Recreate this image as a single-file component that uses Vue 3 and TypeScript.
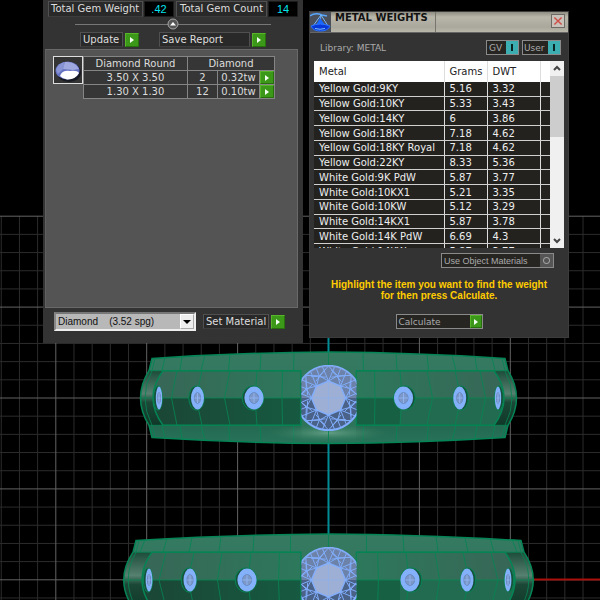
<script setup lang="ts">
import { computed, ref } from 'vue'

interface Metal { name: string; grams: string; dwt: string }
interface GemRow { size: string; count: number; weight: string }
type Point = [number, number]
interface Gem { x: number; rx: number }
interface Ring {
  y: number
  left: number
  corner: number
  top: number
  shoulder: number
  recess: number
  recessLeft: number
  upper: Point[]
  mid: number[][]
  gems: Gem[]
}

const metals: Metal[] = [
  { name: 'Yellow Gold:9KY', grams: '5.16', dwt: '3.32' },
  { name: 'Yellow Gold:10KY', grams: '5.33', dwt: '3.43' },
  { name: 'Yellow Gold:14KY', grams: '6', dwt: '3.86' },
  { name: 'Yellow Gold:18KY', grams: '7.18', dwt: '4.62' },
  { name: 'Yellow Gold:18KY Royal', grams: '7.18', dwt: '4.62' },
  { name: 'Yellow Gold:22KY', grams: '8.33', dwt: '5.36' },
  { name: 'White Gold:9K PdW', grams: '5.87', dwt: '3.77' },
  { name: 'White Gold:10KX1', grams: '5.21', dwt: '3.35' },
  { name: 'White Gold:10KW', grams: '5.12', dwt: '3.29' },
  { name: 'White Gold:14KX1', grams: '5.87', dwt: '3.78' },
  { name: 'White Gold:14K PdW', grams: '6.69', dwt: '4.3' },
  { name: 'White Gold:14KW', grams: '5.87', dwt: '3.77' },
]

const gemRows: GemRow[] = [
  { size: '3.50 X 3.50', count: 2, weight: '0.32tw' },
  { size: '1.30 X 1.30', count: 12, weight: '0.10tw' },
]
const totalCount = computed(() => gemRows.reduce((sum, row) => sum + row.count, 0))

const selected = ref(-1)
const material = ref('diamond')
const showGv = ref(true)
const showUser = ref(true)
const useObject = ref(false)

// Viewport grid: one unit every 18.2, a stronger line every fifth unit
const STEP = 18.18
const columns = Array.from({ length: 74 }, (_, i) => ({ at: 328.5 + (i - 36) * STEP, major: (i - 36) % 5 === 0 }))
const lines = Array.from({ length: 44 }, (_, i) => ({ at: 216.2 + i * STEP, major: i % 5 === 0 }))

const rings: Ring[] = [
  {
    y: 398, left: 140, corner: 152, top: 352, shoulder: 358.5, recess: 27.3, recessLeft: 153,
    upper: [[165, 162], [182, 180], [205, 201], [230, 228.5], [261, 260], [294, 293.5]],
    mid: [[177, 171.5], [202, 196], [230, 224.5], [257, 255], [282.5, 282]],
    gems: [{ x: 159, rx: 3.2 }, { x: 197.5, rx: 6.5 }, { x: 254, rx: 9.6 }, { x: 403.5, rx: 9.6 }, { x: 459.7, rx: 6.5 }, { x: 498, rx: 3.2 }],
  },
  {
    y: 580, left: 122.5, corner: 136, top: 534, shoulder: 540.5, recess: 27.8, recessLeft: 142,
    upper: [[145, 140], [167, 163], [192, 189], [221, 219], [254, 253], [290.5, 290.5]],
    mid: [[166, 159], [194, 188], [222, 217.5], [251, 248], [279.5, 278.5]],
    gems: [{ x: 149, rx: 3.4 }, { x: 190, rx: 6.5 }, { x: 247, rx: 9.6 }, { x: 410, rx: 9.6 }, { x: 467, rx: 6.5 }, { x: 508, rx: 3.4 }],
  },
]

function outline(r: Ring): string {
  const dt = r.y - r.top
  const ds = r.y - r.shoulder
  return `M${r.corner} ${-ds}Q240 ${-dt + 0.5} 328.5 ${-dt}V${dt - 0.5}Q240 ${dt - 1} ${r.corner} ${ds}L${r.corner - 3} ${r.recess}Q${r.left - 8} 0 ${r.corner - 3} ${-r.recess}Z`
}
// Same silhouette without the seam where the two halves meet
function rim(r: Ring): string {
  const dt = r.y - r.top
  const ds = r.y - r.shoulder
  return `M328.5 ${-dt}Q240 ${-dt + 0.5} ${r.corner} ${-ds}L${r.corner - 3} ${-r.recess}Q${r.left - 8} 0 ${r.corner - 3} ${r.recess}L${r.corner} ${ds}Q240 ${dt - 1} 328.5 ${dt - 0.5}`
}
function recess(r: Ring): string {
  return `M301 ${-r.recess}H${r.recessLeft + 10}Q${r.recessLeft - 10} 0 ${r.recessLeft + 10} ${r.recess}H301Z`
}
function lowerRecess(r: Ring): string {
  return `M301 0H${r.recessLeft}Q${r.recessLeft} 16 ${r.recessLeft + 10} ${r.recess}H301Z`
}
function wires(r: Ring): string {
  const e = r.recess
  const s = r.y - r.top - 1.5
  let d = `M${r.corner - 3} ${-e}H301M${r.corner - 3} ${e}H301M${r.left} 0H301`
  r.upper.forEach(([a, b], i) => {
    const lift = Math.max(0, 4 - i * 1.2)
    d += `M${a} ${-s + lift}L${b} ${-e}M${b} ${e}L${a} ${s - lift}`
  })
  r.mid.forEach(([a, b]) => { d += `M${a} ${-e}L${b} 0L${a} ${e}` })
  return d
}
function endWires(r: Ring): string {
  const e = r.recess
  const s = r.y - r.shoulder
  return `M${r.corner + 3} ${-s}L${r.corner} ${-e}Q${r.left - 2} 0 ${r.corner} ${e}L${r.corner + 3} ${s}`
}

// Brilliant-cut facet wireframe
const polar = (radius: number, deg: number): Point => {
  const a = (deg * Math.PI) / 180
  return [Math.round(radius * Math.cos(a) * 10) / 10, Math.round(radius * Math.sin(a) * 10) / 10]
}
const seg = (a: Point, b: Point): string => `M${a[0]} ${a[1]}L${b[0]} ${b[1]}`
const facets = (() => {
  let d = ''
  for (let i = 0; i < 8; i++) {
    const deg = i * 45
    const t = polar(17, deg)
    const next = polar(17, deg + 45)
    const star = polar(24, deg + 22.5)
    d += seg(t, star) + seg(next, star) + seg(star, polar(32, deg)) + seg(star, polar(32, deg + 45))
    d += seg(star, polar(32, deg + 22.5)) + seg(t, polar(32, deg + 11)) + seg(next, polar(32, deg + 34))
    d += seg(polar(28, deg + 6), polar(21, deg + 38)) + seg(polar(21, deg + 8), polar(29, deg + 39))
  }
  return d
})()
const tablePoints = Array.from({ length: 8 }, (_, i) => polar(17, i * 45).join(',')).join(' ')
</script>

<template>
  <main class="viewport">
    <svg class="scene" viewBox="0 0 600 600" preserveAspectRatio="xMidYMin slice" aria-hidden="true">
      <defs>
        <linearGradient id="band" x1="0" y1="0" x2="0" y2="1">
          <stop offset="0" stop-color="#357a61" /><stop offset=".4" stop-color="#337660" />
          <stop offset=".65" stop-color="#216149" /><stop offset="1" stop-color="#28735a" />
        </linearGradient>
        <linearGradient id="edge" x1="0" y1="0" x2="0" y2="1">
          <stop offset="0" stop-color="#1d4c3a" /><stop offset=".42" stop-color="#56806f" />
          <stop offset=".58" stop-color="#1b4837" /><stop offset="1" stop-color="#103828" />
        </linearGradient>
        <linearGradient id="inner" x1="0" y1="0" x2="1" y2="0">
          <stop offset="0" stop-color="#386656" /><stop offset="1" stop-color="#2d785c" />
        </linearGradient>
        <linearGradient id="shade" x1="0" y1="0" x2="1" y2="0">
          <stop offset="0" stop-color="#1b4635" /><stop offset="1" stop-color="#165a41" />
        </linearGradient>
        <radialGradient id="glow">
          <stop offset="0" stop-color="#6da68c" stop-opacity=".85" /><stop offset="1" stop-color="#347a5e" stop-opacity="0" />
        </radialGradient>
        <linearGradient id="seat-fill" x1="0" y1="0" x2="0" y2="1">
          <stop offset="0" stop-color="#357a61" /><stop offset=".7" stop-color="#2f7459" /><stop offset="1" stop-color="#28735a" />
        </linearGradient>
        <clipPath id="seat"><rect x="-27" y="-33" width="55" height="66" /></clipPath>
      </defs>

      <g stroke-width="1">
        <g v-for="major in [false, true]" :key="String(major)" :stroke="major ? '#636363' : '#2c2c2c'">
          <template v-for="c in columns" :key="'c' + c.at">
            <line v-if="c.major === major" :x1="c.at" :x2="c.at" y1="216" y2="1000" />
          </template>
          <template v-for="l in lines" :key="'l' + l.at">
            <line v-if="l.major === major" x1="-320" x2="1000" :y1="l.at" :y2="l.at" />
          </template>
        </g>
      </g>
      <path d="M328.5 338V600" stroke="#008c96" stroke-width="2" />
      <path d="M534 579.5H1000" stroke="#a8100c" stroke-width="2" />

      <g v-for="(r, ri) in rings" :key="ri" :transform="`translate(0 ${r.y})`">
        <g v-for="side in [0, 1]" :key="side" :transform="side ? 'translate(657 0) scale(-1 1)' : undefined">
          <path :d="outline(r)" fill="url(#band)" />
          <path :d="`M${r.corner - 3} ${-r.recess}H${r.recessLeft + 16}V${r.recess}H${r.corner - 3}Q${r.left - 8} 0 ${r.corner - 3} ${-r.recess}Z`" fill="url(#edge)" />
          <path :d="recess(r)" fill="url(#inner)" />
          <path :d="lowerRecess(r)" :fill="side ? '#236b50' : 'url(#shade)'" />
          <rect v-if="side" x="257" y="0" width="44" :height="r.recess" fill="#176044" />
          <path :d="rim(r)" class="wire-strong" />
          <path :d="recess(r)" class="wire-strong" />
          <path :d="wires(r)" class="wire" />
          <path :d="endWires(r)" class="wire" />
        </g>
        <rect x="301.5" y="-44.5" width="54.5" height="88.5" fill="url(#seat-fill)" />
        <ellipse cx="328.5" cy="35" rx="62" ry="9" fill="url(#glow)" />
        <path d="M301 -27.3V27.3M356 -27.3V27.3M328.5 -45V44" class="wire" />
        <g transform="translate(328.5 0)">
          <g clip-path="url(#seat)">
            <circle r="32.2" fill="#4a6188" stroke="#80adff" stroke-width="2" />
            <path d="M-32 0A32 32 0 0 1 32 0Z" fill="#7f94ba" opacity=".65" />
            <path :d="facets" class="facet" />
          </g>
          <polygon :points="tablePoints" fill="#9dafd5" stroke="#83aefc" stroke-width="1.5" />
          <path d="M-17 0H17M0-17V17" class="facet-soft" />
        </g>
        <g v-for="g in r.gems" :key="g.x" :transform="`translate(${g.x} 0)`">
          <ellipse :cx="g.x < 328 ? -1 : 1" :rx="g.rx + 1.2" ry="12.2" class="socket" />
          <ellipse :rx="g.rx" ry="11.4" fill="#82b0fb" />
          <ellipse :rx="g.rx * 0.48" ry="5.4" fill="#7c98c8" stroke="#6684b8" stroke-width=".8" />
          <path :d="`M${-g.rx * 0.5} 0H${g.rx * 0.5}M0-5V5`" stroke="#93b9fa" stroke-width=".8" />
          <ellipse :rx="g.rx * 0.76" ry="8.7" fill="none" stroke="#92b6f1" stroke-width=".8" stroke-dasharray="2 2" />
        </g>
      </g>
    </svg>

    <section class="window gems" aria-label="Gem report">
      <div class="totals">
        <span class="tag total-label">Total Gem Weight</span><output class="readout">.42</output>
        <span class="tag total-label count-label">Total Gem Count</span><output class="readout">{{ totalCount }}</output>
      </div>
      <div class="divider">
        <button class="knob" type="button" aria-label="Collapse">
          <svg viewBox="0 0 12 12"><circle cx="6" cy="6" r="5" fill="#555" stroke="#a5a5a5" /><path d="M3 7.5L6 4L9 7.5Z" fill="#fff" /></svg>
        </button>
      </div>
      <div class="commands">
        <button class="command" type="button"><span class="tag update">Update</span><span class="go"><i /></span></button>
        <button class="command" type="button"><span class="tag save">Save Report</span><span class="go"><i /></span></button>
      </div>
      <div class="report">
        <svg class="gem-icon" viewBox="0 0 30 28">
          <rect x=".5" y=".5" width="29" height="27" fill="#343434" stroke="#ddd" />
          <ellipse cx="16" cy="16.5" rx="12" ry="9.5" fill="#191b24" />
          <ellipse cx="14.5" cy="14.5" rx="12" ry="9" fill="#6673c2" />
          <path d="M3 14Q5 7 12 6L10 13L5 18Z" fill="#8793d3" /><path d="M12 6Q22 5 26 13L20 14L10 13Z" fill="#a0a9df" />
          <path d="M7 20Q9 14 17 15Q24 14 26 17Q22 24 14 23.5Q10 23 7 20Z" fill="#fff" />
        </svg>
        <table class="gem-table">
          <colgroup><col class="c-size"><col class="c-count"><col class="c-weight"><col class="c-go"></colgroup>
          <thead><tr><th>Diamond Round</th><th colspan="3">Diamond</th></tr></thead>
          <tbody>
            <tr v-for="row in gemRows" :key="row.size">
              <td>{{ row.size }}</td><td>{{ row.count }}</td><td>{{ row.weight }}</td>
              <td class="go-cell"><button class="go" type="button" :aria-label="'Select ' + row.size"><i /></button></td>
            </tr>
          </tbody>
        </table>
      </div>
      <div class="material">
        <div class="picker">
          <select v-model="material" aria-label="Gem material"><option value="diamond">Diamond &nbsp; &nbsp;(3.52 spg)</option></select>
          <span class="drop"><i /></span>
        </div>
        <button class="command" type="button"><span class="tag set">Set Material</span><span class="go"><i /></span></button>
      </div>
    </section>

    <section class="window metal" aria-label="Metal weights">
      <header class="titlebar">
        <svg class="scale-icon" viewBox="0 0 21 20">
          <rect width="21" height="20" fill="#4b4f5a" />
          <path d="M0 4Q5 0 12 3L17 4" fill="none" stroke="#58a7ff" stroke-width="1.5" />
          <path d="M11 3L3 14M11 3L18 14M11 3L10 13" stroke="#75b8ff" fill="none" />
          <path d="M6 13L10 6L16 14Z" fill="#1766ff" />
          <path d="M1 14Q10 10 20 14Q18 19 10.5 19Q3 19 1 14Z" fill="#0837d8" stroke="#2b75ff" /><path d="M5 16.5Q10 18 15 16.5" stroke="#7ac0ff" fill="none" />
        </svg>
        <h1>METAL WEIGHTS</h1>
        <span class="title-rest"><button class="close" type="button" aria-label="Close"><svg viewBox="0 0 10 10"><path d="M2 2L8 8M8 2L2 8" stroke="#cf4f48" stroke-width="1.2" /></svg></button></span>
      </header>
      <div class="library">
        <span class="library-name">Library: METAL</span>
        <label class="toggle"><span>GV</span><input v-model="showGv" type="checkbox"></label>
        <label class="toggle user"><span>User</span><input v-model="showUser" type="checkbox"></label>
      </div>
      <div class="list">
        <div class="list-body">
          <table class="metal-table">
            <colgroup><col><col class="c-grams"><col class="c-dwt"><col class="c-end"></colgroup>
            <thead><tr><th>Metal</th><th>Grams</th><th>DWT</th><th /></tr></thead>
            <tbody>
              <tr v-for="(m, i) in metals" :key="m.name" :class="{ active: selected === i }" @click="selected = i">
                <td>{{ m.name }}</td><td>{{ m.grams }}</td><td>{{ m.dwt }}</td><td />
              </tr>
            </tbody>
          </table>
        </div>
        <div class="scrollbar">
          <button type="button" aria-label="Scroll up"><svg viewBox="0 0 14 14"><path d="M4 8.5L7 5.5L10 8.5" /></svg></button>
          <span class="thumb" />
          <button type="button" aria-label="Scroll down"><svg viewBox="0 0 14 14"><path d="M4 5.5L7 8.5L10 5.5" /></svg></button>
        </div>
      </div>
      <label class="object"><span>Use Object Materials</span><input v-model="useObject" type="checkbox"></label>
      <p class="hint">Highlight the item you want to find the weight<br>for then press Calculate.</p>
      <button class="calculate" type="button"><span>Calculate</span><span class="go"><i /></span></button>
    </section>
  </main>
</template>

<style>
body { background: #000; }
</style>

<style scoped>
* { box-sizing: border-box; }
button { padding: 0; border: 0; background: none; color: inherit; font: inherit; cursor: pointer; }
.viewport { position: relative; min-height: 100vh; overflow: hidden; background: #000; font: 10px/14px "DejaVu Sans", sans-serif; color: #ddd; }
.scene { position: absolute; inset: 0; width: 100%; height: 100%; }
.wire { fill: none; stroke: #078454; stroke-width: 1; opacity: .85; }
.wire-strong { fill: none; stroke: #058455; stroke-width: 1.5; }
.facet { fill: none; stroke: #80adfa; stroke-width: 1; }
.facet-soft { fill: none; stroke: #88b0f3; stroke-width: 1; opacity: .5; }
.socket { fill: #155139; stroke: #078454; stroke-width: 1; }

.window { position: absolute; width: 260px; background: #333; }
.gems { left: 43px; top: 0; padding: 1px 5px 12px 2px; }
.metal { left: 309px; top: 11px; padding-bottom: 8px; border: 1px solid #3c3c3c; }
.tag { display: block; height: 15px; padding-left: 2px; border: 1px solid #505050; border-bottom-color: #3c3c3c; background: #292929; text-align: left; white-space: nowrap; line-height: 14px; }

.totals { display: flex; gap: 1px; padding-left: 3px; }
.total-label { width: 95px; height: 16px; }
.count-label { width: 91px; margin-left: 1px; padding-left: 3px; }
.readout { width: 30px; height: 16px; border: 1px solid #1c1c1c; background: #000; color: #00e4ee; font: 11px/15px "Liberation Sans", sans-serif; text-align: center; }
.divider { display: flex; align-items: center; justify-content: center; height: 14px; margin: 0 27px 0 30px; background: linear-gradient(#777, #777) center / 100% 1px no-repeat; }
.knob { width: 12px; height: 12px; }
.knob svg, .close svg, .scrollbar svg { display: block; width: 100%; height: 100%; }
.commands { display: flex; gap: 20px; padding: 1px 0 2px 35px; }
.command { display: flex; align-items: center; gap: 2px; }
.update { width: 43px; }
.save { width: 91px; }
.set { width: 66px; }
.go { display: flex; flex: none; align-items: center; justify-content: center; width: 14px; height: 14px; border: 1px solid #58b52a; border-right-color: #28700e; border-bottom-color: #28700e; background: #3c9818; }
.go i { width: 0; height: 0; border: solid transparent; border-width: 3px 0 3px 4px; border-left-color: #f3fff0; }
.report { display: flex; align-items: flex-start; min-height: 259px; padding: 6px 0 0 7px; border: 1px solid #696969; border-left-color: #606060; background: #545454; }
.gem-icon { flex: none; width: 30px; height: 28px; }
.gem-table { width: 192px; border-collapse: collapse; table-layout: fixed; background: #363636; text-align: center; }
.gem-table th, .gem-table td { height: 14px; padding: 0; border: 1px solid #858585; line-height: 13px; font-weight: 400; }
.c-count { width: 30px; }
.c-weight { width: 42px; }
.c-go { width: 15px; }
.gem-table .go { width: 14px; height: 13px; }
.material { display: flex; align-items: center; gap: 7px; padding: 4px 0 0 9px; }
.picker { display: flex; width: 142px; height: 19px; border: 2px solid #eee; border-top-color: #777; border-left-color: #888; background: #b8b8b8; }
.picker select { flex: 1; min-width: 0; padding: 0 0 0 2px; border: 0; appearance: none; background: #b8b8b8; color: #111; font: 10px/14px "Liberation Sans", sans-serif; }
.drop { display: flex; align-items: center; justify-content: center; width: 14px; border: 1px solid #fff; border-right-color: #aaa; border-bottom-color: #aaa; background: #eee; pointer-events: none; }
.drop i { border: solid transparent; border-width: 4px 4px 0; border-top-color: #000; }

.titlebar { display: flex; height: 21px; border-bottom: 1px solid #666; background: linear-gradient(#8f8c82, #b9b6aa 25%, #aaa79c 75%, #b9b6aa); }
.scale-icon { flex: none; width: 21px; height: 20px; }
h1 { width: 105px; margin: 0; padding-left: 4px; border-right: 1px solid #77756e; color: #111; font: bold 10px/11px "DejaVu Sans", sans-serif; white-space: nowrap; }
.title-rest { display: flex; flex: 1; align-items: flex-start; justify-content: flex-end; padding: 2px 3px 0 0; }
.close { width: 14px; height: 14px; border: 1px solid #6d6a65; background: #c8c2bb; }
.library { display: flex; align-items: center; gap: 3px; padding: 7px 7px 6px 10px; }
.library-name { flex: 1; color: #aaa; font-size: 9px; }
.toggle, .object, .calculate { display: flex; align-items: center; height: 15px; border: 1px solid #8a8a8a; background: #262522; color: #aaa; font: 9px/12px "DejaVu Sans", sans-serif; }
.toggle { width: 33px; padding-left: 2px; }
.user { width: 39px; padding-left: 1px; }
.toggle span, .object span, .calculate > span:first-child { flex: 1; text-align: left; white-space: nowrap; }
.toggle input { width: 12px; height: 13px; margin: 0; appearance: none; background: #3cadb0; }
.toggle input:checked { background: linear-gradient(#0a2526, #0a2526) center / 2px 7px no-repeat #3cadb0; }
.list { display: flex; height: 187px; margin: 0 4px; }
.list-body { flex: 1; overflow: hidden; }
.metal-table { width: 100%; height: 198px; border-collapse: collapse; table-layout: fixed; background: #23221f; color: #eee; }
.metal-table th, .metal-table td { padding: 1px 0 0 5px; text-align: left; line-height: 12px; white-space: nowrap; font-weight: 400; }
.metal-table th { height: 21px; padding-top: 0; border-right: 1px solid #ddd; background: #fff; color: #222; }
.metal-table td { border-right: 1px solid #ddd; border-bottom: 1px solid #d0d0d0; }
.metal-table td:last-child, .metal-table th:last-child { border-right: 0; }
.metal-table .active td { background: #245d8a; }
.c-grams { width: 43px; }
.c-dwt { width: 53px; }
.c-end { width: 10px; }
.scrollbar { display: flex; flex-direction: column; width: 14px; background: #f0f0f0; }
.scrollbar button { height: 15px; }
.scrollbar path { fill: none; stroke: #444; stroke-width: 2; }
.scrollbar .thumb { height: 61px; background: #cdcdcd; }
.scrollbar button:last-child { margin-top: auto; }
.object { width: 113px; margin: 5px 14px 0 auto; padding-left: 2px; font-family: "Liberation Sans", sans-serif; }
.object input { width: 13px; height: 13px; margin: 0; appearance: none; background: radial-gradient(circle, #555 2px, #a0a0a0 3px, #555 4px); }
.hint { margin: 11px 0 13px; color: #fc0; font: bold 10px/11px "Liberation Sans", sans-serif; text-align: center; }
.calculate { width: 87px; margin: 0 auto; padding-left: 2px; }
.calculate .go { width: 12px; height: 13px; }
</style>
